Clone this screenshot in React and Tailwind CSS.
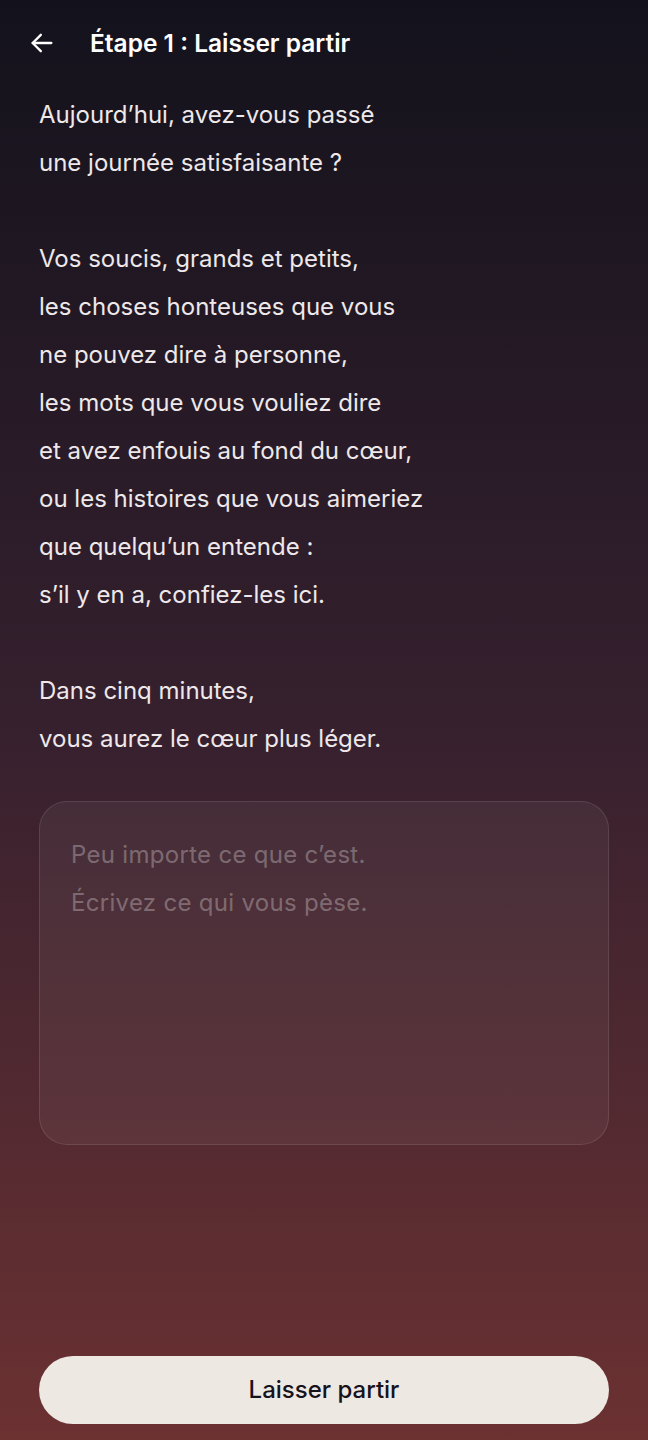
import { useState } from 'react'

const intro = [
  'Aujourd’hui, avez-vous passé',
  'une journée satisfaisante ?',
  '',
  'Vos soucis, grands et petits,',
  'les choses honteuses que vous',
  'ne pouvez dire à personne,',
  'les mots que vous vouliez dire',
  'et avez enfouis au fond du cœur,',
  'ou les histoires que vous aimeriez',
  'que quelqu’un entende :',
  's’il y en a, confiez-les ici.',
  '',
  'Dans cinq minutes,',
  'vous aurez le cœur plus léger.',
]

export default function App() {
  const [text, setText] = useState('')

  return (
    <div
      className="min-h-screen flex flex-col bg-gradient-to-b from-[#13121c] via-[#36202e] to-[#6c3131] text-[#eee8ea]"
      style={{ fontFamily: 'Inter, "Noto Sans", sans-serif' }}
    >
      <div className="h-[84px] flex items-center pl-[28px] gap-[34px] pt-[2px]">
        <button className="w-[28px] h-[28px] flex items-center justify-center text-white">
          <svg width="28" height="28" viewBox="0 0 24 24" fill="none" stroke="currentColor" strokeWidth="2" strokeLinecap="round" strokeLinejoin="round">
            <path d="M20 12H4" />
            <path d="M11 5l-7 7 7 7" />
          </svg>
        </button>
        <h1 className="text-[24.5px] font-semibold text-white">Étape 1 : Laisser partir</h1>
      </div>

      <div className="px-[39px] pt-[7px]">
        <div className="text-[24px] leading-[48px]">
          {intro.map((line, i) => (
            <p key={i} className="h-[48px]">{line}</p>
          ))}
        </div>

        <div className="mt-[38px] h-[344px] rounded-[28px] border border-white/10 bg-white/5">
          <textarea
            value={text}
            onChange={e => setText(e.target.value)}
            placeholder={'Peu importe ce que c’est.\nÉcrivez ce qui vous pèse.'}
            className="w-full h-full resize-none bg-transparent outline-none px-[31px] pt-[29px] text-[24px] leading-[48px] tracking-[0.3px] text-[#eee8ea] placeholder:text-white/30"
          />
        </div>
      </div>

      <div className="flex-1" />

      <div className="px-[39px] pb-[16px]">
        <button className="w-full h-[68px] rounded-full bg-[#eee8e3] text-[#17131c] text-[24px] font-medium">
          Laisser partir
        </button>
      </div>
    </div>
  )
}
